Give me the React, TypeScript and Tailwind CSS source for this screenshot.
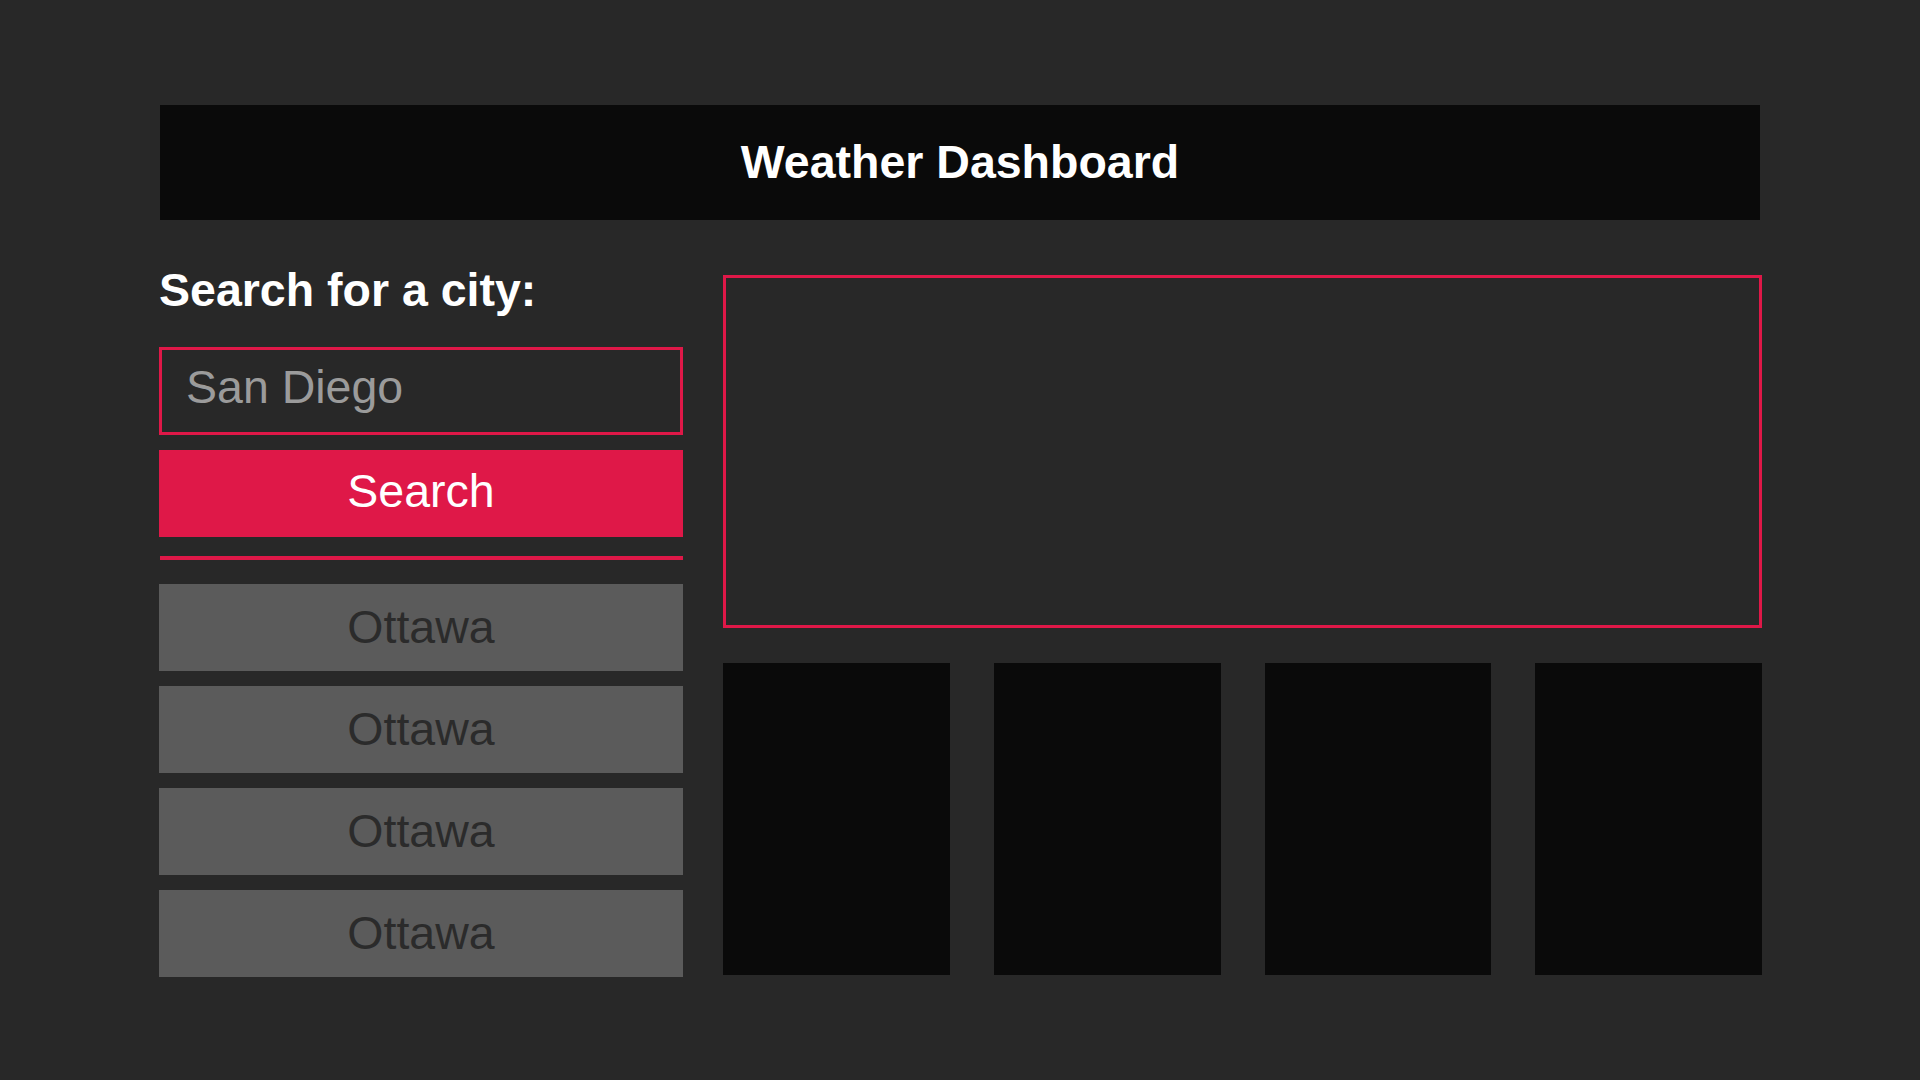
import React from "react";

export default function App() {
  const cities = ["Ottawa", "Ottawa", "Ottawa", "Ottawa"];
  return (
    <div
      className="min-h-screen w-full bg-[#282828] pt-[105px]"
      style={{ fontFamily: '"Liberation Sans", Arial, sans-serif' }}
    >
      <div className="ml-[160px] w-[1602px]">
        <header className="flex h-[115px] w-[1600px] items-center justify-center bg-[#0a0a0a]">
          <h1 className="text-[46.5px] font-bold leading-[53px] text-white">Weather Dashboard</h1>
        </header>

        <main className="mt-[44px] flex gap-[40px]">
          <section className="-ml-[1px] flex w-[524px] flex-col">
            <h2 className="text-[46.5px] font-bold leading-[53px] text-white">Search for a city:</h2>
            <input
              type="text"
              placeholder="San Diego"
              className="mt-[30px] box-border h-[88px] w-full border-[3px] border-[#df1848] bg-transparent pb-[19px] pl-[24px] pt-[11px] text-[46.5px] text-white outline-none placeholder:text-[#9b9b9b]"
            />
            <button className="mt-[15px] flex h-[87px] w-full items-center justify-center bg-[#df1848] pb-[5px] text-[46.5px] leading-[53px] text-white">
              Search
            </button>
            <div className="ml-[1px] mt-[19px] h-[4px] w-[523px] bg-[#df1848]" />
            <ul className="mt-[24px] flex flex-col gap-[15px]">
              {cities.map((c, i) => (
                <li
                  key={i}
                  className="flex h-[87px] items-center justify-center bg-[#5b5b5b] text-[46.5px] leading-[53px] text-[#2b2b2b]"
                >
                  {c}
                </li>
              ))}
            </ul>
          </section>

          <section className="mt-[11px] flex w-[1039px] flex-col">
            <div className="h-[353px] w-full border-[3px] border-[#df1848]" />
            <div className="mt-[35px] grid grid-cols-4 gap-[44px]">
              {[0, 1, 2, 3].map((i) => (
                <div key={i} className="h-[312px] bg-[#0a0a0a]" />
              ))}
            </div>
          </section>
        </main>
      </div>
    </div>
  );
}
